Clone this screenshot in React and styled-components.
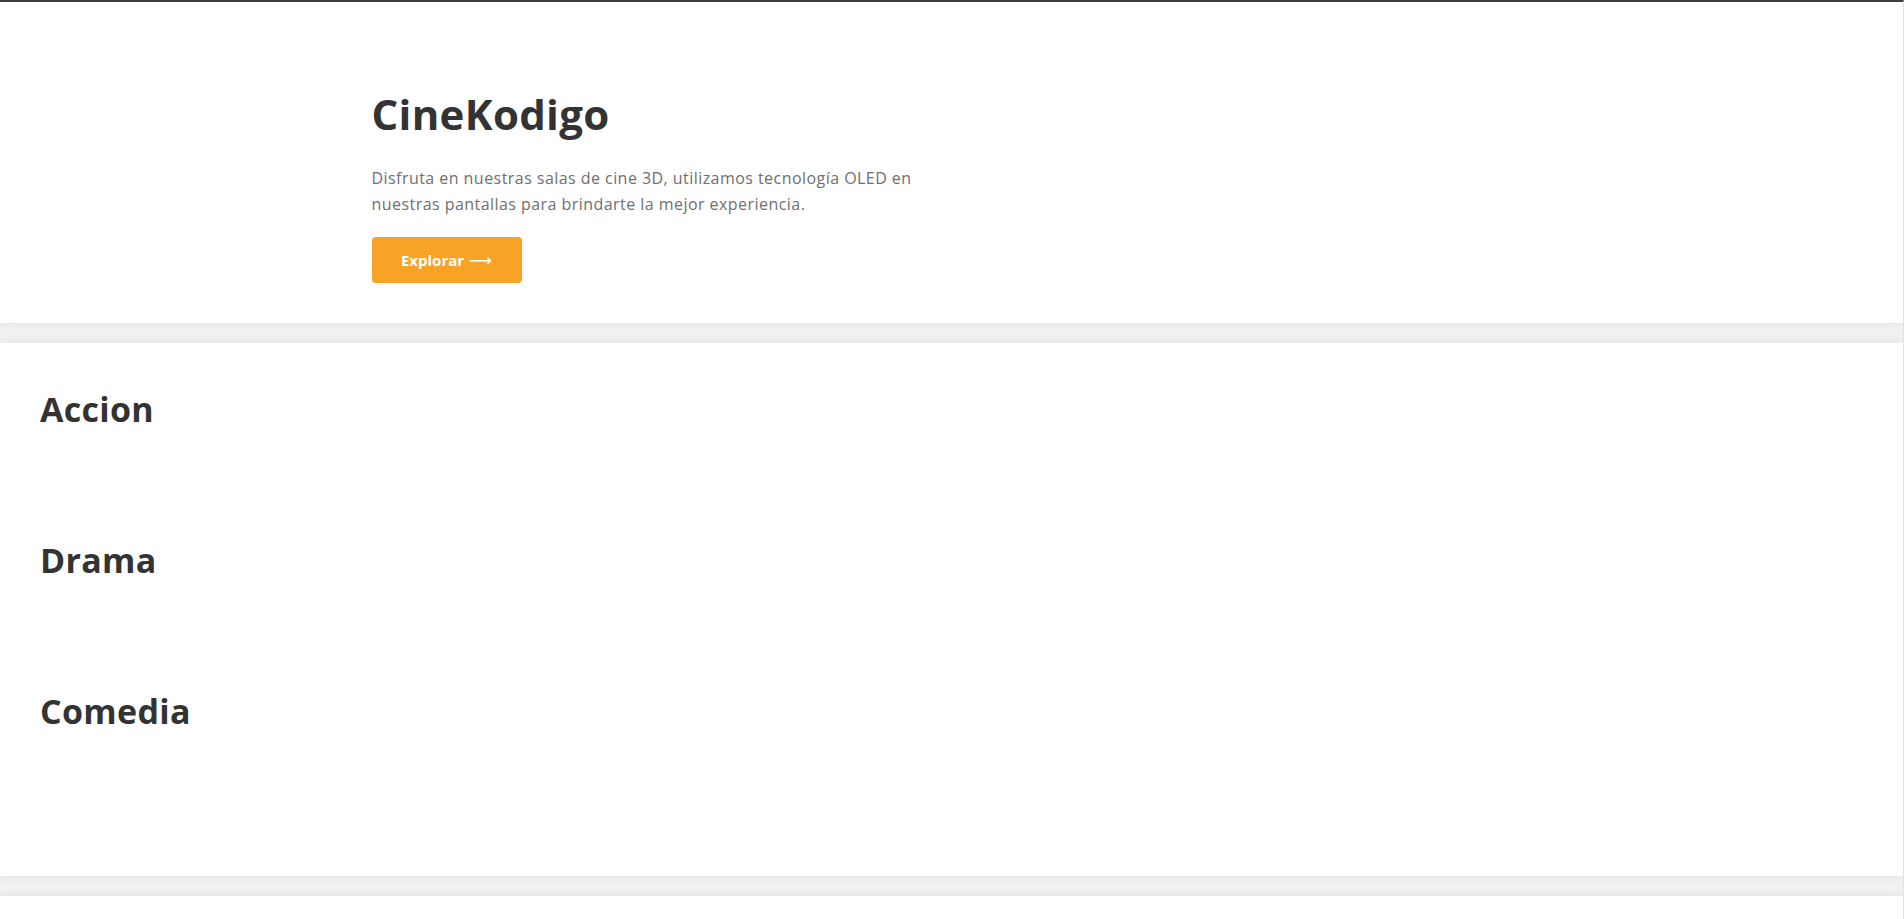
import React from "react";
import styled, { createGlobalStyle } from "styled-components";

const GlobalStyle = createGlobalStyle`
  * {
    box-sizing: border-box;
  }
  html, body {
    margin: 0;
    padding: 0;
    background: #f2f2f2;
    font-family: "Open Sans", "Liberation Sans", sans-serif;
    color: #333;
  }
`;

const Page = styled.div`
  min-height: 100vh;
  border-top: 2px solid #3c3c3c;
  border-right: 1px solid #e2e2e2;
  display: flex;
  flex-direction: column;
  gap: 20px;
  overflow: hidden;
`;

const Card = styled.section`
  background: #fff;
  box-shadow: 0 0 10px rgba(0, 0, 0, 0.09);
`;

const Hero = styled(Card)`
  padding: 88px 0 40px;
`;

const HeroInner = styled.div`
  max-width: 1160px;
  margin: 0 auto;
  display: flex;
  flex-direction: column;
  align-items: flex-start;
`;

const HeroTitle = styled.h1`
  margin: 0 0 27px;
  font-size: 42px;
  line-height: 48px;
  font-weight: 700;
  color: #333;
  letter-spacing: 0.3px;
`;

const HeroText = styled.p`
  margin: 0 0 20px;
  max-width: 585px;
  font-size: 16px;
  line-height: 26px;
  letter-spacing: 0.45px;
  color: #6f6f6f;
`;

const ExploreButton = styled.button`
  height: 46px;
  width: 150px;
  border: none;
  border-radius: 4px;
  background: #f7a325;
  color: #fff;
  font-family: "Open Sans", "Liberation Sans", sans-serif;
  font-size: 15px;
  font-weight: 700;
  cursor: pointer;
  display: flex;
  align-items: center;
  justify-content: center;
  gap: 5px;
`;

const Arrow = styled.span`
  font-family: "DejaVu Sans", sans-serif;
  font-weight: 400;
  font-size: 16px;
`;

const Catalog = styled(Card)`
  padding: 46px 40px 34px;
`;

const Category = styled.div`
  height: 151px;
  display: flex;
  flex-direction: column;
`;

const CategoryTitle = styled.h2`
  margin: 0;
  font-size: 34px;
  line-height: 40px;
  font-weight: 700;
  color: #333;
  letter-spacing: 0.3px;
`;

const MovieRow = styled.div`
  flex: 1;
  display: flex;
  gap: 16px;
`;

const Footer = styled(Card)`
  min-height: 200px;
`;

const categories = ["Accion", "Drama", "Comedia"];

const App = () => {
  return (
    <>
      <GlobalStyle />
      <Page>
        <Hero>
          <HeroInner>
            <HeroTitle>CineKodigo</HeroTitle>
            <HeroText>
              Disfruta en nuestras salas de cine 3D, utilizamos tecnología OLED
              en nuestras pantallas para brindarte la mejor experiencia.
            </HeroText>
            <ExploreButton>
              Explorar <Arrow>⟶</Arrow>
            </ExploreButton>
          </HeroInner>
        </Hero>
        <Catalog>
          {categories.map((name) => (
            <Category key={name}>
              <CategoryTitle>{name}</CategoryTitle>
              <MovieRow />
            </Category>
          ))}
        </Catalog>
        <Footer />
      </Page>
    </>
  );
};

export default App;
